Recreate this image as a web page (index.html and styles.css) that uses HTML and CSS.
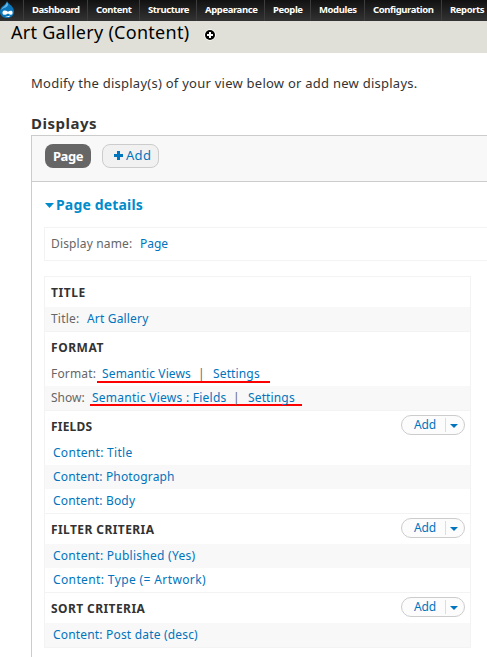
FILE: index.html
```
<!DOCTYPE html>
<html lang="en">
<head>
<meta charset="utf-8">
<title>Art Gallery (Content)</title>
<link rel="stylesheet" href="styles.css">
</head>
<body>
<nav class="toolbar">
  <a class="home"><svg width="16" height="17" viewBox="0 0 16 17"><path d="M7 0C8 3 14 5 14 10.5C14 14.5 11 17 7 17S0 14.500 0 10.500C0 5 6.500 4 7 0Z" fill="#0c76ba"/><path d="M7 1C6 5 2 6 1.200 9C4 6 8 7 8 3Z" fill="#68b5e3"/><path d="M2.500 11.500C3 8.800 5.600 9.200 8 10.800C10 9.400 12.600 9.200 12.600 11.800C12.600 14.400 10.500 14 8 12.400C5.500 14.400 2.300 14.500 2.500 11.500ZM5 14.700Q8 16 10 14.500L9.500 15.800Q7 16.500 5 14.700Z" fill="#fff"/></svg></a>
  <a>Dashboard</a><a>Content</a><a>Structure</a><a>Appearance</a><a>People</a><a>Modules</a><a>Configuration</a><a>Reports</a>
</nav>
<header class="branding">
  <h1>Art Gallery (Content)</h1>
  <svg class="shortcut" width="12" height="12" viewBox="0 0 12 12"><circle cx="6" cy="6" r="5.800" fill="#fff"/><circle cx="6" cy="6" r="5" fill="#000"/><path d="M5 3h2v2h2v2H7v2H5V7H3V5h2z" fill="#fff"/></svg>
</header>
<main>
  <p class="intro">Modify the display(s) of your view below or add new displays.</p>
  <h2>Displays</h2>
  <section class="displays">
    <div class="tabs">
      <a class="tab active">Page</a>
      <a class="tab add"><svg width="9" height="9" viewBox="0 0 9 9"><path d="M3 0h3v3h3v3H6v3H3V6H0V3h3z" fill="#0074bd"/></svg><span>Add</span></a>
    </div>
    <div class="details">
      <h3><svg width="9" height="5" viewBox="0 0 9 5"><path d="M0 0h9L4.500 5z" fill="#008ccb"/></svg><span>Page details</span></h3>
      <div class="name-box"><span class="label name">Display name:</span><a>Page</a></div>
      <div class="column">
        <section>
          <div class="head"><h4 class="h-wide">TITLE</h4></div>
          <div class="row shade"><span class="label title-label">Title:</span><a class="gallery">Art Gallery</a></div>
        </section>
        <section>
          <div class="head"><h4 class="h-wide">FORMAT</h4></div>
          <div class="row"><span class="label format-label">Format:</span><span class="marked format-mark"><a class="semantic">Semantic Views</a><i>|</i><a>Settings</a></span></div>
          <div class="row shade"><span class="label show-label">Show:</span><span class="marked show-mark"><a class="semantic-fields">Semantic Views : Fields</a><i>|</i><a>Settings</a></span></div>
        </section>
        <section>
          <div class="head"><h4 class="h-fields">FIELDS</h4><div class="dropbutton"><a>Add</a><b><svg width="8" height="4" viewBox="0 0 8 4"><path d="M0 0h8L4 4z" fill="#0074bd"/></svg></b></div></div>
          <div class="row item"><a class="f-title">Content: Title</a></div>
          <div class="row item shade"><a class="f-photo">Content: Photograph</a></div>
          <div class="row item"><a class="f-body">Content: Body</a></div>
        </section>
        <section>
          <div class="head"><h4>FILTER CRITERIA</h4><div class="dropbutton"><a>Add</a><b><svg width="8" height="4" viewBox="0 0 8 4"><path d="M0 0h8L4 4z" fill="#0074bd"/></svg></b></div></div>
          <div class="row item shade"><a class="f-published">Content: Published (Yes)</a></div>
          <div class="row item"><a class="f-type">Content: Type (= Artwork)</a></div>
        </section>
        <section>
          <div class="head"><h4>SORT CRITERIA</h4><div class="dropbutton"><a>Add</a><b><svg width="8" height="4" viewBox="0 0 8 4"><path d="M0 0h8L4 4z" fill="#0074bd"/></svg></b></div></div>
          <div class="row item shade"><a class="f-date">Content: Post date (desc)</a></div>
        </section>
      </div>
    </div>
  </section>
</main>
</body>
</html>
```
FILE: styles.css
```
* { box-sizing: border-box; }
body { margin: 0; height: 657px; overflow: hidden; background: #fff; color: #333; font: 12px "Noto Sans", "Open Sans", sans-serif; white-space: nowrap; }
h1, h2, h3, h4, p { margin: 0; }
svg { display: block; flex: none; }
a { color: #0074bd; }

.toolbar { height: 21px; display: grid; grid-template-columns: 23px 64px 52px 57px 68px 46px 54px 77px 60px; background: linear-gradient(#111, #333); overflow: hidden; }
.toolbar a { padding-left: 8px; border-left: 1px solid #3c3c3c; color: #fff; font-size: 9.5px; font-weight: 700; line-height: 19px; letter-spacing: -0.4px; }
.toolbar .home { padding: 1px 0 0; border: 0; }

.branding { height: 32px; padding-left: 11px; display: flex; background: #e0e0d8; }
h1 { width: 193px; color: #000; font-size: 18px; font-weight: 400; line-height: 23px; letter-spacing: 0.28px; }
.shortcut { margin-top: 8px; }

main { padding-left: 31px; }
.intro { height: 61px; padding-top: 20px; font-size: 13px; line-height: 20px; letter-spacing: 0.25px; }
h2 { height: 21px; font-size: 15px; line-height: 18px; letter-spacing: 0.5px; }
.displays { height: 540px; border: solid #ccc; border-width: 1px 0 0 1px; }
.tabs { height: 46px; padding: 8px 13px; display: flex; gap: 11px; background: #f8f8f8; border-bottom: 1px solid #ccc; }
.tab { height: 24px; display: flex; align-items: center; border-radius: 8px; font-size: 13px; line-height: 20px; }
.active { width: 46px; padding-bottom: 1px; justify-content: center; background: #666; color: #fff; font-weight: 700; letter-spacing: -0.4px; }
.add { width: 57px; padding: 0 0 2px 11px; gap: 3px; background: #f1f1f1; border: 1px solid #ccc; letter-spacing: 0.3px; }
.details { padding: 13px 0 0 12px; }
h3 { height: 32px; display: flex; gap: 2px; color: #008ccb; font-size: 14px; line-height: 20px; letter-spacing: 0.17px; }
h3 svg { margin: 8px 0 0 1px; }
.name-box { height: 34px; padding-left: 6px; border: solid #f3f3f3; border-width: 1px 0 1px 1px; display: flex; line-height: 32px; }
.label { color: #666; }
.name { width: 89px; letter-spacing: 0.15px; }
.column { width: 427px; margin-top: 15px; border: solid #f3f3f3; border-width: 1px 1px 0; }
.column section { border-bottom: 1px solid #f3f3f3; }
.head { height: 30px; padding: 0 5px 0 6px; display: flex; justify-content: space-between; }
h4 { font-size: 12px; line-height: 31px; letter-spacing: 0.42px; }
.h-wide { letter-spacing: 0.55px; }
.h-fields { letter-spacing: 0.2px; }
.row { height: 24px; padding-left: 6px; display: flex; line-height: 23px; }
.item { padding-left: 8px; }
.shade { background: #f8f8f8; }
.title-label { width: 36px; letter-spacing: 0.2px; }
.gallery { letter-spacing: 0.17px; }
.format-label { width: 46px; letter-spacing: 0.15px; }
.show-label { width: 39px; }
.marked { display: flex; border-bottom: 2px solid #f00; }
.marked a { letter-spacing: 0.14px; }
.marked i { width: 15px; color: #666; font-style: normal; }
.format-mark { width: 173px; height: 21px; padding-left: 5px; }
.show-mark { width: 212px; height: 20px; padding-left: 2px; }
.marked .semantic { width: 96px; }
.marked .semantic-fields { width: 141px; letter-spacing: 0.25px; }
.f-title { letter-spacing: 0.29px; }
.f-photo { letter-spacing: 0.16px; }
.f-body { letter-spacing: 0.17px; }
.f-published { letter-spacing: 0.26px; }
.f-type { letter-spacing: 0.38px; }
.f-date { letter-spacing: 0.18px; }
.dropbutton { width: 64px; height: 20px; margin-top: 4px; display: flex; align-items: center; border: 1px solid #ccc; border-radius: 10px; background: #fcfcfc; }
.dropbutton a { width: 43px; padding-left: 12px; line-height: 18px; letter-spacing: -0.2px; }
.dropbutton b { height: 14px; padding: 6px 0 0 4px; border-left: 1px solid #ddd; }
```
